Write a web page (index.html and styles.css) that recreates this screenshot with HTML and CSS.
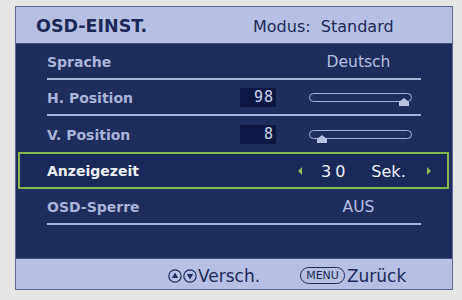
FILE: index.html
```html
<!DOCTYPE html>
<html lang="de">
<head>
  <meta charset="UTF-8" />
  <title>OSD-Einstellungen</title>
  <link rel="stylesheet" href="styles.css">
</head>
<body>
  <div class="osd">
    <div class="head">
      <span class="title">OSD-EINST.</span>
      <span class="mode">Modus:&nbsp; Standard</span>
    </div>

    <div class="menu">
      <div class="row">
        <div class="row-in line">
          <span class="label">Sprache</span>
          <span class="value">Deutsch</span>
        </div>
      </div>
      <div class="row">
        <div class="row-in line">
          <span class="label">H. Position</span>
          <span class="num">98</span>
          <span class="slider"><span class="thumb" style="left: 89px"></span></span>
        </div>
      </div>
      <div class="row">
        <div class="row-in">
          <span class="label">V. Position</span>
          <span class="num">8</span>
          <span class="slider"><span class="thumb" style="left: 7px"></span></span>
        </div>
      </div>
      <div class="row active">
        <div class="row-in">
          <span class="label">Anzeigezeit</span>
          <span class="pick">
            <span class="arrow left"></span>
            <span class="secs">30</span>
            <span class="unit">Sek.</span>
            <span class="arrow right"></span>
          </span>
        </div>
      </div>
      <div class="row">
        <div class="row-in line">
          <span class="label">OSD-Sperre</span>
          <span class="value">AUS</span>
        </div>
      </div>
    </div>

    <div class="foot">
      <span class="hint">
        <span class="circ">
          <svg width="14" height="14" viewBox="0 0 14 14"><circle cx="7" cy="7" r="6.2" fill="none" stroke="#1d2a5c" stroke-width="1.2"/><path d="M7 3.5 L10.2 9 L3.8 9 Z" fill="#1d2a5c"/></svg>
        </span>
        <span class="circ">
          <svg width="14" height="14" viewBox="0 0 14 14"><circle cx="7" cy="7" r="6.2" fill="none" stroke="#1d2a5c" stroke-width="1.2"/><path d="M7 10.5 L10.2 5 L3.8 5 Z" fill="#1d2a5c"/></svg>
        </span>
        Versch.
      </span>
      <span class="hint">
        <span class="key">MENU</span>Zurück
      </span>
    </div>
  </div>
</body>
</html>
```

FILE: styles.css
```css
body {
  margin: 0;
  padding: 0;
  background: #e5e5e3;
  font-family: 'DejaVu Sans', sans-serif;
}

.osd {
  box-sizing: border-box;
  width: 438px;
  height: 284px;
  margin: 6px 0 0 15px;
  border: 1px solid #5d668f;
  background: #1f2c5e;
  display: flex;
  flex-direction: column;
}

.head {
  height: 37px;
  background: #b7c0e2;
  border-bottom: 1px solid #45507e;
  display: flex;
  align-items: center;
  padding-top: 2px;
  box-sizing: border-box;
  color: #1c2858;
}

.title {
  font-weight: bold;
  font-size: 17.5px;
  margin-left: 20px;
  width: 217px;
}

.mode {
  font-size: 16px;
}

.menu {
  flex: 1;
}

.row {
  height: 36px;
  padding: 0 31px;
  box-sizing: border-box;
}

.row.active {
  margin: 0 3px 0 2px;
  padding: 0 28px 0 27px;
  height: 37px;
  border: 2px solid #86b94c;
  background: #1b285a;
}

.row-in {
  height: 100%;
  box-sizing: border-box;
  display: flex;
  align-items: center;
  padding-top: 1px;
  font-size: 14px;
  font-weight: bold;
  color: #aab3da;
}

.row-in.line {
  border-bottom: 2px solid #a9b2d9;
}

.label {
  width: 193px;
  flex: none;
}

.active .label {
  color: #eef0f8;
}

.value {
  flex: 1;
  text-align: center;
  padding-left: 56px;
  font-weight: normal;
  font-size: 15.5px;
  color: #b7bfe2;
}

.num {
  width: 36px;
  height: 19px;
  box-sizing: border-box;
  background: #0f1745;
  color: #cdd2ec;
  font-family: 'DejaVu Sans Mono', monospace;
  font-weight: normal;
  font-size: 15px;
  text-align: right;
  padding-right: 2px;
  line-height: 19px;
  letter-spacing: 1px;
}

.slider {
  position: relative;
  margin-left: 33px;
  width: 103px;
  height: 9px;
  box-sizing: border-box;
  border: 1.5px solid #a9b2d9;
  border-radius: 5px;
}

.thumb {
  position: absolute;
  top: 4px;
  width: 10px;
  height: 8px;
  background: #b9c1e3;
  clip-path: polygon(50% 0, 100% 50%, 100% 100%, 0 100%, 0 50%);
}

.pick {
  display: flex;
  align-items: center;
  margin-left: 58px;
  color: #eef0f8;
  font-weight: normal;
}

.arrow {
  width: 0;
  height: 0;
  border-top: 4px solid transparent;
  border-bottom: 4px solid transparent;
}

.arrow.left {
  border-right: 4.5px solid #8cc04e;
}

.arrow.right {
  border-left: 4.5px solid #8cc04e;
  margin-left: 21px;
}

.secs {
  margin-left: 19px;
  font-size: 16px;
  letter-spacing: 4px;
}

.unit {
  margin-left: 22px;
  font-size: 16px;
}

.foot {
  height: 31px;
  background: #b7c0e2;
  border-top: 1px solid #45507e;
  display: flex;
  align-items: center;
  padding: 3px 0 0 152px;
  box-sizing: border-box;
  color: #1d2a5c;
  font-size: 17px;
}

.hint {
  display: flex;
  align-items: center;
}

.hint + .hint {
  margin-left: 40px;
}

.circ {
  display: flex;
  margin-right: 1px;
}

.key {
  font-size: 11px;
  border: 1.2px solid #1d2a5c;
  border-radius: 9px;
  padding: 1px 5px;
  margin-right: 2px;
  line-height: 13px;
}
```
